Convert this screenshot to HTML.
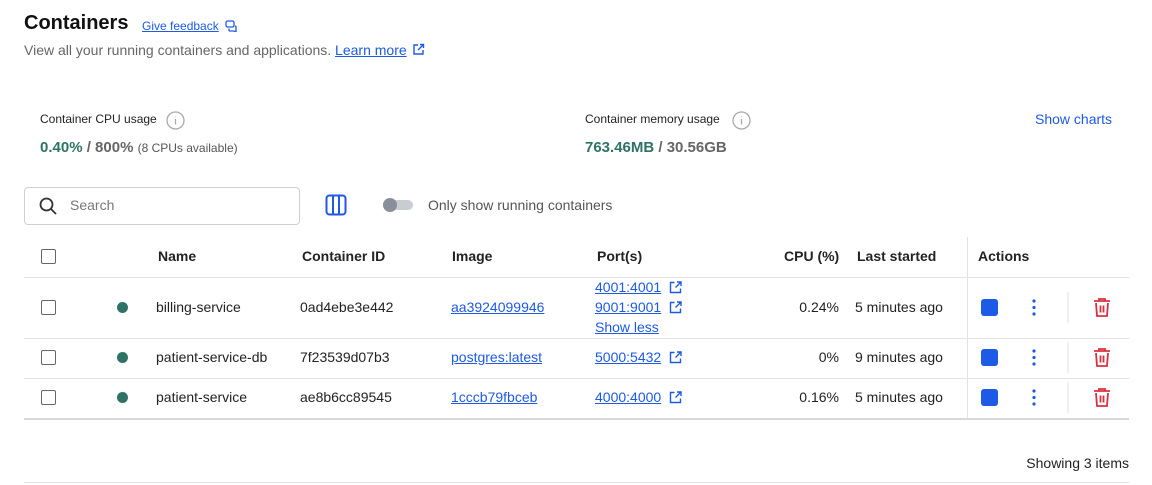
<!DOCTYPE html><html><head><style>
body{margin:0;width:1152px;height:485px;background:#fff;font-family:"Liberation Sans",sans-serif;color:#222;position:relative;overflow:hidden}
.a{position:absolute;white-space:nowrap}
a,.l{color:#1d5ae6;text-decoration:underline}
.t{font-size:14px}
.cb{position:absolute;width:13px;height:13px;border:1.5px solid #666;border-radius:2px}
.dot{position:absolute;width:11px;height:11px;border-radius:50%;background:#2e7366}
.hl{position:absolute;left:24px;width:1105px;height:1px;background:#e3e3e3}
</style></head><body>
<div class="a" style="left:24px;top:12px;font-size:20px;font-weight:bold;color:#111">Containers</div>
<div class="a l" style="left:142px;top:19px;font-size:12px">Give feedback</div>
<svg class="a" style="left:225px;top:20px" width="12" height="12" viewBox="0 0 12 12" fill="none" stroke="#1d5ae6" stroke-width="1.3"><rect x="1" y="1" width="8" height="6" rx="1.5"/><path d="M4 8.5v1.5a1 1 0 0 0 1 1h4l2 1v-5a1 1 0 0 0-1-1"/></svg>
<div class="a" style="left:24px;top:42px;font-size:14px;color:#666">View all your running containers and applications. <span class="l">Learn more</span> <svg width="13" height="13" viewBox="0 0 13 13" fill="none" stroke="#1d5ae6" stroke-width="1.4" style="vertical-align:-1px;margin-left:1px"><path d="M6 2H2v9h9V7M8 1.5h3.5V5M11.5 1.5 6 7"/></svg></div>

<div class="a" style="left:40px;top:112px;font-size:12px;color:#222">Container CPU usage</div>
<svg class="a" style="left:166px;top:111px" width="19" height="19" viewBox="0 0 19 19" fill="none" stroke="#aaa" stroke-width="1.3"><circle cx="9.5" cy="9.5" r="8.5"/><path d="M9.5 8v5.5M9.5 5.5v.5"/></svg>
<div class="a" style="left:40px;top:139px;font-size:15px;font-weight:bold;color:#2e7366">0.40% <span style="color:#666">/ 800%</span> <span style="font-size:12px;font-weight:normal;color:#555">(8 CPUs available)</span></div>
<div class="a" style="left:585px;top:112px;font-size:12px">Container memory usage</div>
<svg class="a" style="left:732px;top:111px" width="19" height="19" viewBox="0 0 19 19" fill="none" stroke="#aaa" stroke-width="1.3"><circle cx="9.5" cy="9.5" r="8.5"/><path d="M9.5 8v5.5M9.5 5.5v.5"/></svg>
<div class="a" style="left:585px;top:139px;font-size:15px;font-weight:bold;color:#2e7366">763.46MB <span style="color:#666">/ 30.56GB</span></div>
<div class="a" style="left:1035px;top:111px;font-size:14px;color:#1d5ae6">Show charts</div>

<div class="a" style="left:24px;top:187px;width:274px;height:36px;border:1px solid #d0d0d0;border-radius:4px"></div>
<svg class="a" style="left:38px;top:196px" width="20" height="20" viewBox="0 0 20 20" fill="none" stroke="#333" stroke-width="1.8"><circle cx="8.5" cy="8.5" r="6"/><path d="M13 13l5 5"/></svg>
<div class="a t" style="left:70px;top:197px;color:#777">Search</div>
<svg class="a" style="left:325px;top:194px" width="22" height="22" viewBox="0 0 22 22" fill="none" stroke="#1d5ae6" stroke-width="2"><rect x="1.5" y="1.5" width="19" height="19" rx="3"/><path d="M8 2v18M14 2v18"/></svg>
<div class="a" style="left:384px;top:200px;width:29px;height:10px;border-radius:5px;background:#c9ccd3"></div>
<div class="a" style="left:383px;top:198px;width:14px;height:14px;border-radius:50%;background:#8a8f9c"></div>
<div class="a t" style="left:428px;top:197px;color:#555">Only show running containers</div>

<div class="a" style="left:967px;top:237px;width:1px;height:182px;background:#e3e3e3"></div>
<div class="cb" style="left:41px;top:249px"></div>
<div class="a t" style="left:158px;top:248px;font-weight:bold">Name</div>
<div class="a t" style="left:302px;top:248px;font-weight:bold">Container ID</div>
<div class="a t" style="left:452px;top:248px;font-weight:bold">Image</div>
<div class="a t" style="left:597px;top:248px;font-weight:bold">Port(s)</div>
<div class="a t" style="left:784px;top:248px;font-weight:bold">CPU (%)</div>
<div class="a t" style="left:857px;top:248px;font-weight:bold">Last started</div>
<div class="a t" style="left:978px;top:248px;font-weight:bold">Actions</div>
<div class="hl" style="top:277px"></div>
<div class="hl" style="top:338px"></div>
<div class="hl" style="top:378px"></div>
<div class="hl" style="top:418px;height:2px;background:#d8d8d8"></div>

<div class="cb" style="left:41px;top:300px"></div><div class="dot" style="left:117px;top:302px"></div>
<div class="a t" style="left:156px;top:299px">billing-service</div>
<div class="a t" style="left:300px;top:299px">0ad4ebe3e442</div>
<div class="a t l" style="left:451px;top:299px">aa3924099946</div>
<div class="a t l" style="left:595px;top:279px">4001:4001</div>
<div class="a t l" style="left:595px;top:299px">9001:9001</div>
<div class="a t l" style="left:595px;top:319px">Show less</div>
<div class="a t" style="left:839px;top:299px;transform:translateX(-100%)">0.24%</div>
<div class="a t" style="left:855px;top:299px">5 minutes ago</div>
<div class="cb" style="left:41px;top:350px"></div><div class="dot" style="left:117px;top:352px"></div>
<div class="a t" style="left:156px;top:349px">patient-service-db</div>
<div class="a t" style="left:300px;top:349px">7f23539d07b3</div>
<div class="a t l" style="left:451px;top:349px">postgres:latest</div>
<div class="a t l" style="left:595px;top:349px">5000:5432</div>
<div class="a t" style="left:839px;top:349px;transform:translateX(-100%)">0%</div>
<div class="a t" style="left:855px;top:349px">9 minutes ago</div>
<div class="cb" style="left:41px;top:390px"></div><div class="dot" style="left:117px;top:392px"></div>
<div class="a t" style="left:156px;top:389px">patient-service</div>
<div class="a t" style="left:300px;top:389px">ae8b6cc89545</div>
<div class="a t l" style="left:451px;top:389px">1cccb79fbceb</div>
<div class="a t l" style="left:595px;top:389px">4000:4000</div>
<div class="a t" style="left:839px;top:389px;transform:translateX(-100%)">0.16%</div>
<div class="a t" style="left:855px;top:389px">5 minutes ago</div>

<svg class="a" style="left:0;top:0" width="1152" height="485" fill="none">
<defs>
<g id="ext" stroke="#1d5ae6" stroke-width="1.4"><path d="M5.5 1.5H1.5v10h10V7.5M8 1h4v4M12 1 6.5 6.5"/></g>
<g id="act"><rect x="0" y="0" width="17" height="17" rx="3" fill="#1d5ae6"/>
<g fill="#1d5ae6"><circle cx="53" cy="2" r="1.6"/><circle cx="53" cy="8.5" r="1.6"/><circle cx="53" cy="15" r="1.6"/></g>
<path d="M87 -7v31" stroke="#e3e3e3"/>
<g stroke="#d9303e" stroke-width="1.8"><path d="M113 2h16M118 2V0h6v2M115 4l1 13h10l1-13M119.5 6.5v7M122.5 6.5v7"/></g></g>
</defs>
<use href="#ext" x="669" y="281"/><use href="#ext" x="669" y="301"/><use href="#ext" x="669" y="351"/><use href="#ext" x="669" y="391"/>
<use href="#act" x="981" y="299"/><use href="#act" x="981" y="349"/><use href="#act" x="981" y="389"/>
</svg>

<div class="a t" style="right:23px;top:455px">Showing 3 items</div>
<div class="hl" style="top:482px"></div>
</body></html>
